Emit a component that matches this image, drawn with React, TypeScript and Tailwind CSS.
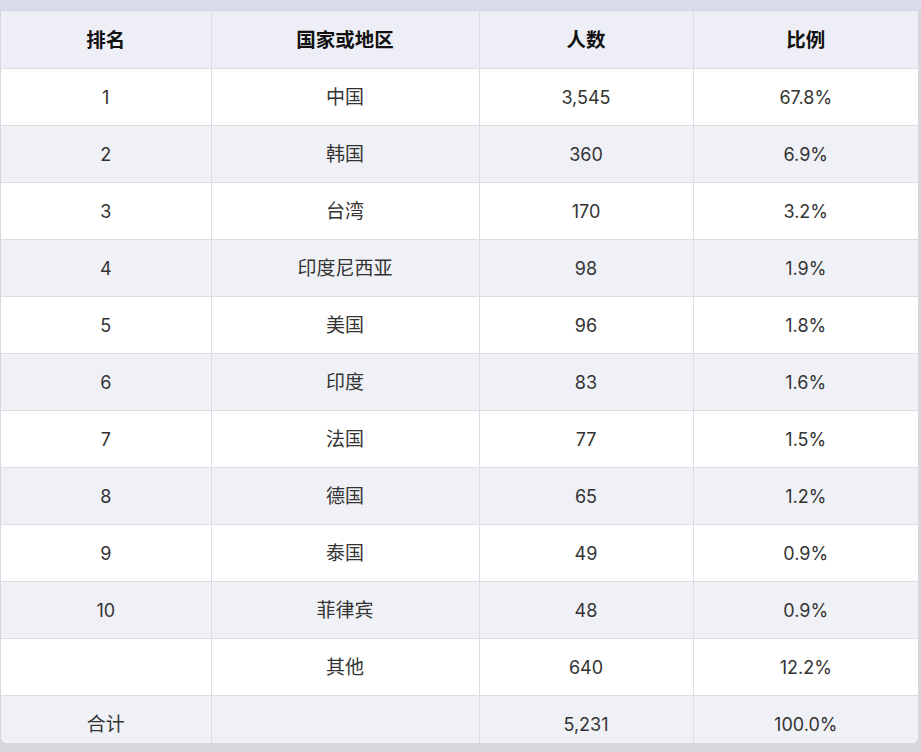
const rows: [string, string, string, string][] = [
  ["1", "中国", "3,545", "67.8%"],
  ["2", "韩国", "360", "6.9%"],
  ["3", "台湾", "170", "3.2%"],
  ["4", "印度尼西亚", "98", "1.9%"],
  ["5", "美国", "96", "1.8%"],
  ["6", "印度", "83", "1.6%"],
  ["7", "法国", "77", "1.5%"],
  ["8", "德国", "65", "1.2%"],
  ["9", "泰国", "49", "0.9%"],
  ["10", "菲律宾", "48", "0.9%"],
  ["", "其他", "640", "12.2%"],
  ["合计", "", "5,231", "100.0%"],
];

const font = { fontFamily: 'Inter, "Noto Sans CJK SC", sans-serif' };
const isCjk = (s: string) => /[\u4e00-\u9fff]/.test(s);

export default function App() {
  return (
    <div className="w-[921px] h-[752px] overflow-hidden bg-[#d7d7dd] flex flex-col" style={font}>
      <div className="h-[11px] bg-[#d9dcea] border-b border-[#cfd2e0] shrink-0" />
      <div className="flex-1 overflow-hidden bg-white rounded-b-[6px] mr-[3px] ml-[1px]">
        <table className="w-full border-collapse table-fixed">
          <colgroup>
            <col className="w-[210px]" />
            <col className="w-[268px]" />
            <col className="w-[214px]" />
            <col />
          </colgroup>
          <thead>
            <tr className="h-[57px] bg-[#eeeff6] border-b border-[#dcdde3]">
              {["排名", "国家或地区", "人数", "比例"].map((h, i) => (
                <th
                  key={h}
                  className={`pt-[3px] text-[19.5px] font-bold text-[#111] text-center ${i < 3 ? "border-r border-[#dcdde3]" : ""}`}
                >
                  {h}
                </th>
              ))}
            </tr>
          </thead>
          <tbody>
            {rows.map((r, ri) => (
              <tr
                key={ri}
                className={`h-[57px] border-b border-[#dcdde3] ${ri % 2 === 1 ? "bg-[#f0f1f6]" : "bg-white"}`}
              >
                {r.map((c, ci) => (
                  <td
                    key={ci}
                    className={`text-[#333] text-center ${isCjk(c) ? "pt-[4px] text-[19px]" : "pt-[1px] text-[18px]"} ${ci < 3 ? "border-r border-[#dcdde3]" : ""}`}
                  >
                    {c}
                  </td>
                ))}
              </tr>
            ))}
          </tbody>
        </table>
      </div>
      <div className="h-[9px] shrink-0" />
    </div>
  );
}
